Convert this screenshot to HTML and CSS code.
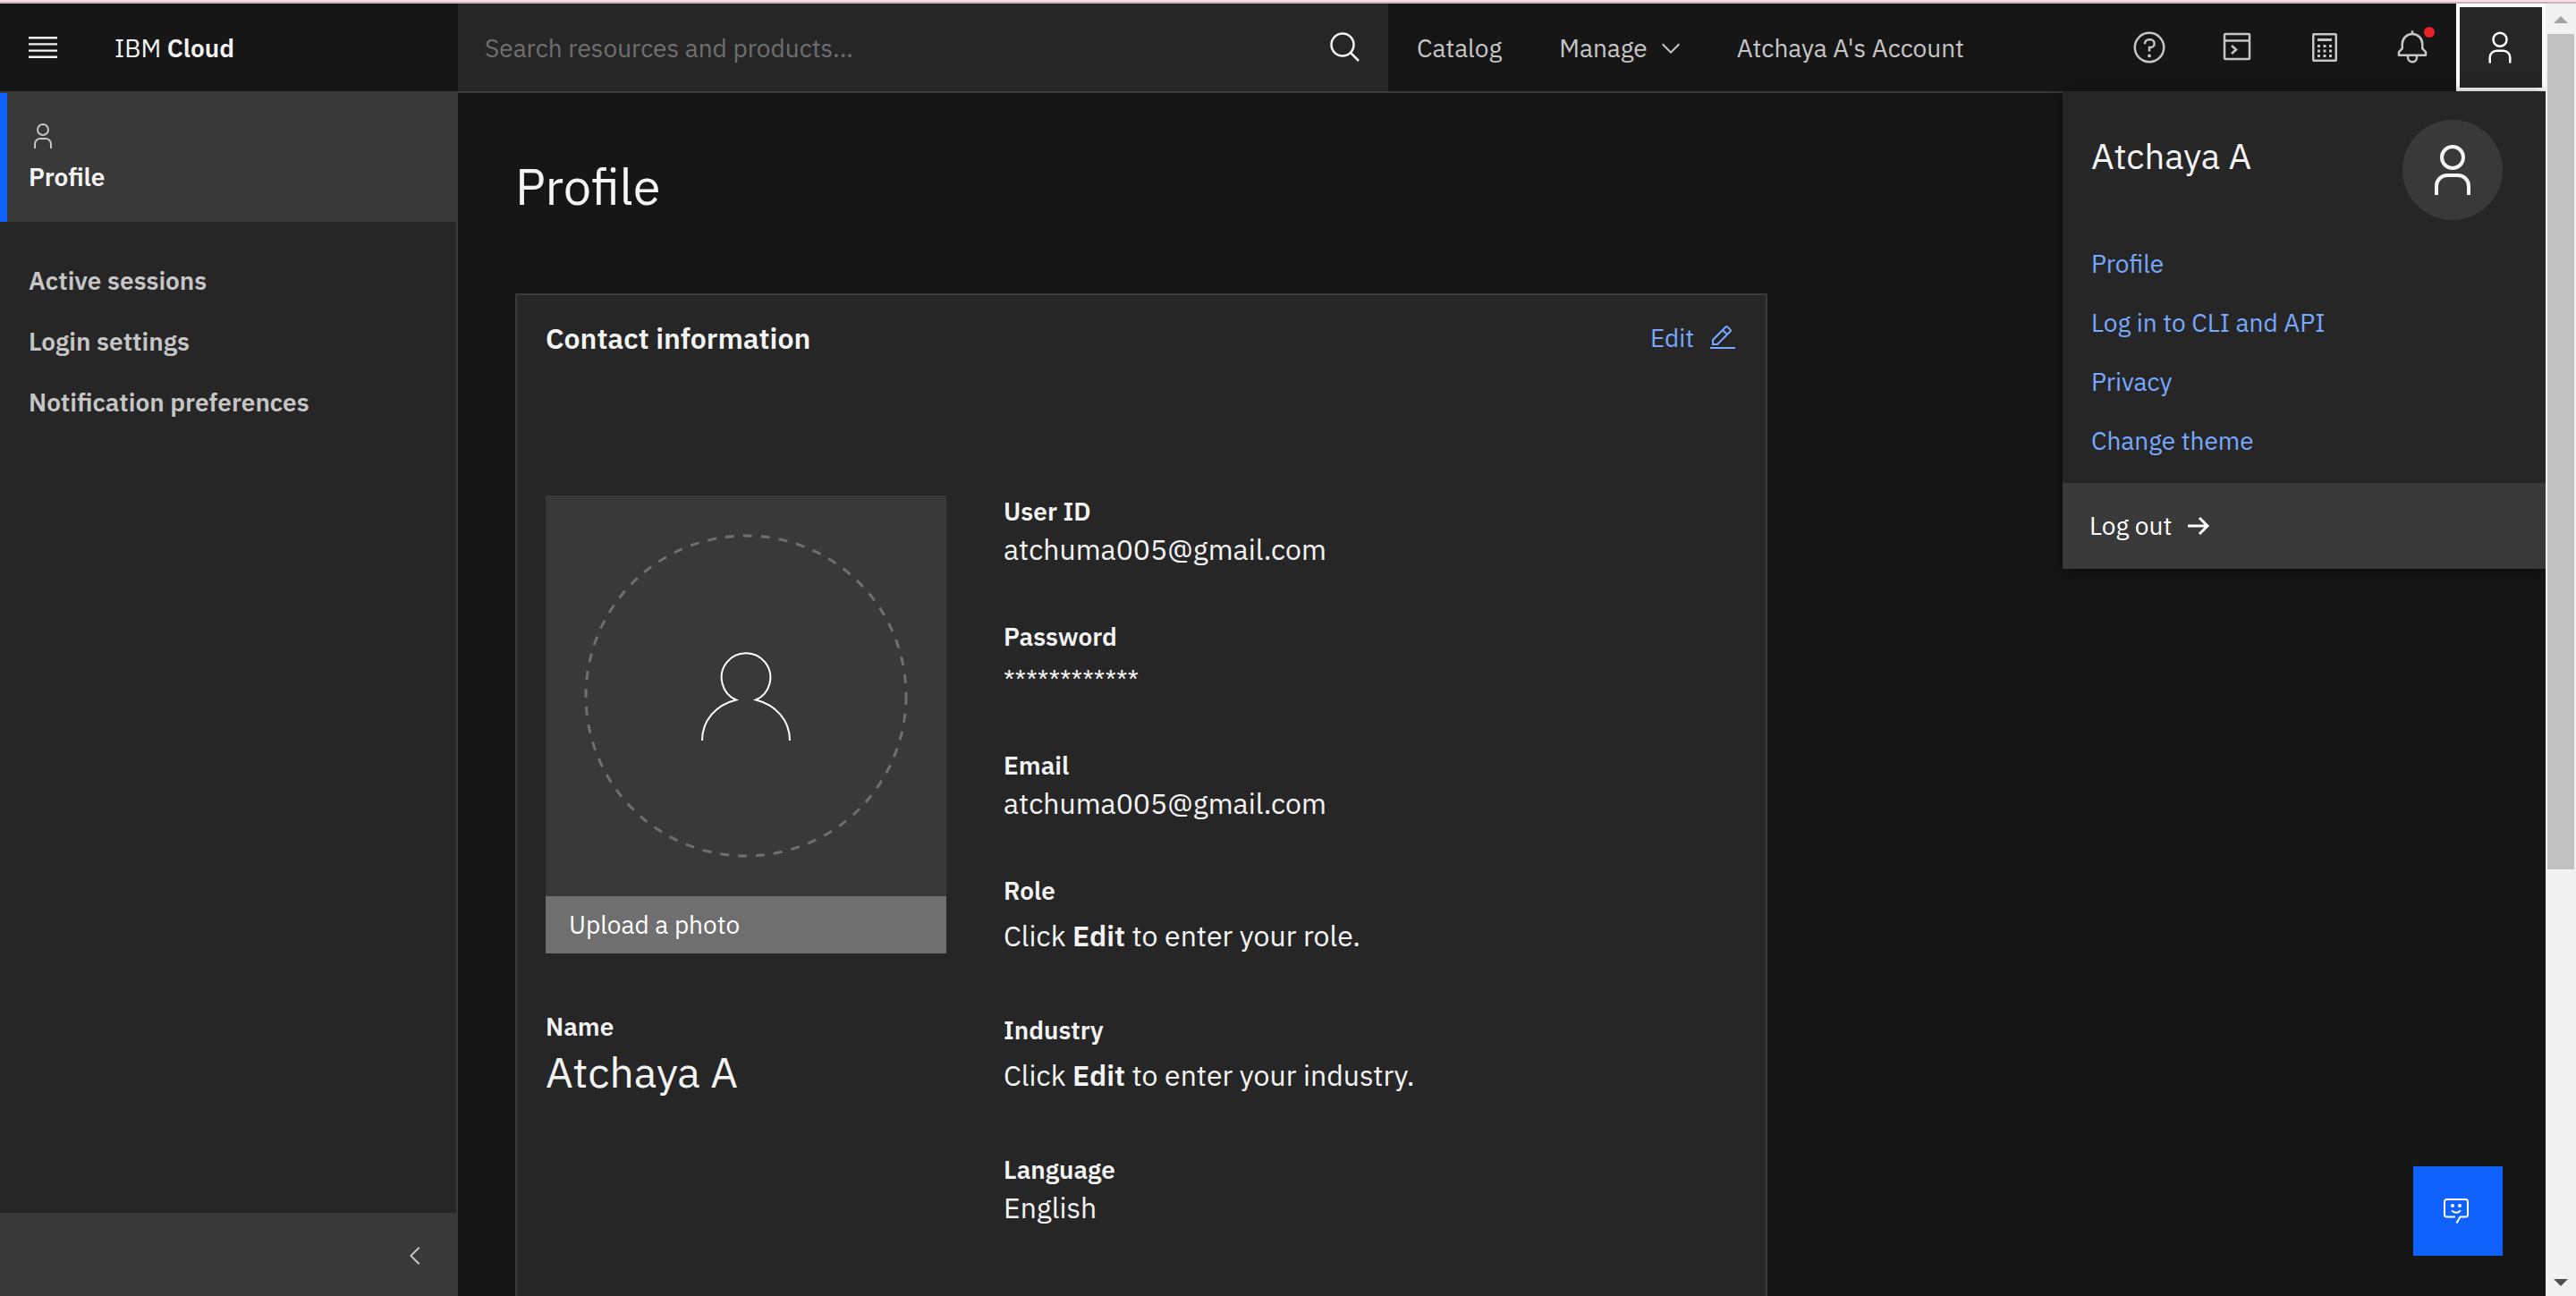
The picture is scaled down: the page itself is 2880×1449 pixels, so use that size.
FILE: index.html
```html
<!DOCTYPE html>
<html lang="en">
<head>
<meta charset="utf-8">
<title>Profile - IBM Cloud</title>
<meta name="viewport" content="width=device-width, initial-scale=1">
<link rel="stylesheet" href="styles.css">
</head>
<body>
<svg class="sprite" aria-hidden="true">
  <symbol id="user" viewBox="0 0 32 32">
    <path d="M16,4a5,5,0,1,1-5,5,5,5,0,0,1,5-5m0-2a7,7,0,1,0,7,7A7,7,0,0,0,16,2Z"/>
    <path d="M26,30H24V25a5,5,0,0,0-5-5H13a5,5,0,0,0-5,5v5H6V25a7,7,0,0,1,7-7h6a7,7,0,0,1,7,7Z"/>
  </symbol>
</svg>
<div class="window">
  <div class="app">
    <header class="header">
      <div class="brand">
        <button class="menu-button" type="button" aria-label="Open menu">
          <svg class="icon" viewBox="0 0 20 20"><path d="M2 14.8h16V16H2zM2 11.2h16v1.2H2zM2 7.6h16v1.2H2zM2 4h16v1.2H2z"/></svg>
        </button>
        <a class="brand-name" href="#">IBM <b>Cloud</b></a>
      </div>
      <form class="search">
        <input class="search-input" type="text" aria-label="Search" placeholder="Search resources and products...">
        <button class="search-button" type="button" aria-label="Search">
          <svg class="icon line" viewBox="0 0 40 40"><circle cx="17" cy="17" r="12.500"/><path d="M26 26l9 9"/></svg>
        </button>
      </form>
      <nav class="nav">
        <a href="#">Catalog</a>
        <a class="nav-menu" href="#">Manage
          <svg class="chevron" viewBox="6 6 20 20"><path d="M16 22L6 12l1.400-1.400 8.600 8.600 8.600-8.600L26 12z"/></svg>
        </a>
        <a href="#">Atchaya A's Account</a>
      </nav>
      <div class="actions">
        <button type="button" aria-label="Help">
          <svg class="icon" viewBox="0 0 32 32"><path d="M16 2a14 14 0 1014 14A14 14 0 0016 2zm0 26a12 12 0 1112-12A12 12 0 0116 28z"/><circle cx="16" cy="23.500" r="1.500"/><path d="M17 8h-1.500A4.490 4.490 0 0011 12.500V13h2v-.5A2.500 2.500 0 0115.500 10H17a2.500 2.500 0 010 5h-2v4.500h2V17a4.500 4.500 0 000-9z"/></svg>
        </button>
        <button type="button" aria-label="Cloud Shell">
          <svg class="icon line" viewBox="0 0 40 40"><rect x="6" y="5" width="28" height="28" rx="1"/><path d="M6 12.500h28M14 18l5 4.500-5 4.500"/></svg>
        </button>
        <button type="button" aria-label="Cost estimator">
          <svg class="icon" viewBox="0 0 40 40"><path d="M32 4H8a2 2 0 00-2 2v28a2 2 0 002 2h24a2 2 0 002-2V6a2 2 0 00-2-2zm-.5 29.500h-23v-27h23z"/><path d="M12 10h16v3H12zM12 17h3v3h-3zM18.500 17h3v3h-3zM25 17h3v3h-3zM12 22.500h3v3h-3zM18.500 22.500h3v3h-3zM25 22.500h3v3h-3zM12 28h3v3h-3zM18.500 28h3v3h-3zM25 28h3v3h-3z"/></svg>
        </button>
        <button class="bell" type="button" aria-label="Notifications">
          <svg class="icon" viewBox="0 0 32 32"><path d="M28.700 19.300L26 16.600V13a10 10 0 00-9-9.950V1h-2v2.050A10 10 0 006 13v3.600l-2.700 2.700A1 1 0 003 20v3a1 1 0 001 1h7v.8a5.100 5.100 0 004.500 5.200A5 5 0 0021 25v-1h7a1 1 0 001-1v-3a1 1 0 00-.3-.7zM19 25a3 3 0 01-6 0v-1h6zm8-3H5v-1.600l2.700-2.700A1 1 0 008 17v-4a8 8 0 0116 0v4a1 1 0 00.3.700l2.700 2.700z"/></svg>
          <span class="dot"></span>
        </button>
        <button class="account" type="button" aria-label="Account" aria-expanded="true">
          <svg class="icon"><use href="#user"/></svg>
        </button>
      </div>
      <section class="panel" aria-label="Account menu">
        <div class="panel-body">
          <div class="panel-head">
            <h2 class="panel-name">Atchaya A</h2>
            <span class="avatar"><svg class="avatar-icon"><use href="#user"/></svg></span>
          </div>
          <ul class="panel-links">
            <li><a href="#">Profile</a></li>
            <li><a href="#">Log in to CLI and API</a></li>
            <li><a href="#">Privacy</a></li>
            <li><a href="#">Change theme</a></li>
          </ul>
        </div>
        <button class="logout" type="button">Log out
          <svg class="arrow" viewBox="0 0 28 28"><path d="M2 14h22M15 5l9 9-9 9"/></svg>
        </button>
      </section>
    </header>
    <div class="content">
      <aside class="sidebar">
        <a class="side-current" href="#">
          <svg class="side-icon"><use href="#user"/></svg>
          Profile
        </a>
        <nav class="side-links">
          <a href="#">Active sessions</a>
          <a href="#">Login settings</a>
          <a href="#">Notification preferences</a>
        </nav>
        <button class="collapse" type="button" aria-label="Collapse navigation">
          <svg class="side-icon" viewBox="0 0 32 32"><path d="M10 16L20 6l1.400 1.400-8.600 8.600 8.600 8.600L20 26z"/></svg>
        </button>
      </aside>
      <main class="main">
        <h1 class="title">Profile</h1>
        <section class="card">
          <div class="card-head">
            <h2 class="card-title">Contact information</h2>
            <button class="edit" type="button">Edit
              <svg class="side-icon" viewBox="0 0 32 32"><path d="M2 26h28v2H2zM25.400 9c.8-.8.8-2 0-2.800l-3.600-3.600c-.8-.8-2-.8-2.800 0l-15 15V24h6.400zM20.400 4L24 7.600l-3 3L17.400 7zM6 22v-3.600l10-10 3.600 3.600-10 10z"/></svg>
            </button>
          </div>
          <div class="card-grid">
            <div>
              <div class="photo">
                <svg class="photo-art" viewBox="0 0 448 448" aria-hidden="true">
                  <circle class="ring" cx="224" cy="224" r="179"/>
                  <path class="figure" d="M175 274C175 251 191 234 213 228.500A27.300 27.300 0 1 1 235 228.500C257 234 273 251 273 274"/>
                </svg>
                <button class="upload" type="button">Upload a photo</button>
              </div>
              <dl>
                <dt>Name</dt>
                <dd class="name">Atchaya A</dd>
              </dl>
            </div>
            <dl class="fields">
              <div><dt>User ID</dt><dd>atchuma005@gmail.com</dd></div>
              <div class="masked"><dt>Password</dt><dd>************</dd></div>
              <div><dt>Email</dt><dd>atchuma005@gmail.com</dd></div>
              <div class="hint"><dt>Role</dt><dd>Click <b>Edit</b> to enter your role.</dd></div>
              <div class="hint"><dt>Industry</dt><dd>Click <b>Edit</b> to enter your industry.</dd></div>
              <div><dt>Language</dt><dd>English</dd></div>
            </dl>
          </div>
        </section>
      </main>
    </div>
    <button class="chat" type="button" aria-label="Chat">
      <svg class="chat-icon" viewBox="0 0 32 32"><path d="M15 22.500H5.500A2.500 2.500 0 013 20V5.500A2.500 2.500 0 015.500 3h21A2.500 2.500 0 0129 5.500V20a2.500 2.500 0 01-2.500 2.500H20.500L16.500 29.500M11 15.500q5 4.500 10 0"/><circle cx="12" cy="10" r="1"/><circle cx="20" cy="10" r="1"/></svg>
    </button>
  </div>
  <div class="scrollbar" aria-hidden="true">
    <span class="scroll-up"></span>
    <span class="thumb"></span>
    <span class="scroll-down"></span>
  </div>
</div>
</body>
</html>
```
FILE: styles.css
```css
* { box-sizing: border-box; }

body {
  margin: 0;
  height: 100vh;
  overflow: hidden;
  display: flex;
  flex-direction: column;
  border-top: 2px solid #fddde4;
  background: #161616;
  color: #f4f4f4;
  font: 28px/36px "IBM Plex Sans", Roboto, sans-serif;
}

h1, h2, dl, dd, ul { margin: 0; padding: 0; font-weight: 400; }
ul { list-style: none; }
a { color: inherit; text-decoration: none; }
b, dt { font-weight: 600; }

button {
  border: 0;
  padding: 0;
  background: none;
  color: inherit;
  font: inherit;
}

svg { display: block; fill: currentColor; }
.sprite { position: absolute; width: 0; height: 0; }
.icon { width: 40px; height: 40px; }
.line { fill: none; stroke: currentColor; stroke-width: 2.5; }

.window {
  flex: 1;
  min-height: 0;
  display: flex;
  border-top: 2px solid #c9b3b9;
}

.app {
  position: relative;
  flex: 1;
  min-width: 0;
  display: flex;
  flex-direction: column;
}

/* Header */
.header {
  position: relative;
  z-index: 1;
  flex: none;
  height: 100px;
  display: flex;
  border-bottom: 2px solid #393939;
}

.brand {
  width: 512px;
  display: flex;
  align-items: center;
  gap: 60px;
  padding-left: 28px;
}

.search {
  flex: 0 1 1040px;
  display: flex;
  align-items: center;
  padding: 0 28px 0 30px;
  background: #262626;
}

.search-input {
  flex: 1;
  min-width: 0;
  border: 0;
  padding: 2px 0 0;
  background: none;
  color: inherit;
  font: inherit;
}
.search-input::placeholder { color: #6f6f6f; opacity: 1; }

.brand-name { padding-top: 2px; }

.nav {
  display: flex;
  align-items: center;
  gap: 64px;
  padding: 2px 0 0 32px;
  color: #c6c6c6;
}
.nav-menu { display: flex; align-items: center; gap: 16px; }
.chevron { width: 20px; height: 20px; }

.actions { display: flex; margin-left: auto; color: #c6c6c6; }
.actions button { width: 98px; display: grid; place-items: center; }
.bell { position: relative; }
.dot {
  position: absolute;
  top: 26px;
  right: 24px;
  width: 12px;
  height: 12px;
  border-radius: 50%;
  background: #ee2025;
}
.actions .account {
  width: 100px;
  padding-right: 2px;
  border: 4px solid #fff;
  background: #262626;
  color: #fff;
}

/* Account panel */
.panel {
  position: absolute;
  top: 98px;
  right: 0;
  width: 540px;
  background: #262626;
  box-shadow: 0 4px 16px rgba(0, 0, 0, 0.6);
}
.panel-body { padding: 32px 48px 14px 32px; }
.panel-head { display: flex; justify-content: space-between; }
.panel-name { padding-top: 16px; font-size: 40px; line-height: 48px; }
.avatar {
  width: 112px;
  height: 112px;
  display: grid;
  place-items: center;
  border-radius: 50%;
  background: #393939;
}
.avatar-icon { width: 64px; height: 64px; }
.panel-links { padding-top: 16px; color: #78a9ff; line-height: 66px; }
.logout {
  width: 100%;
  height: 96px;
  display: flex;
  align-items: center;
  gap: 16px;
  padding-left: 30px;
  background: #393939;
  color: #fff;
}
.arrow { width: 28px; height: 28px; fill: none; stroke: currentColor; stroke-width: 3; }

/* Sidebar */
.content { flex: 1; min-height: 0; display: flex; }
.sidebar {
  width: 512px;
  flex: none;
  display: flex;
  flex-direction: column;
  border-right: 2px solid #393939;
  background: #262626;
  font-weight: 600;
}
.side-current {
  height: 144px;
  display: flex;
  flex-direction: column;
  gap: 12px;
  padding: 32px 24px;
  border-left: 8px solid #0f62fe;
  background: #393939;
}
.side-icon { width: 32px; height: 32px; }
.side-current .side-icon { color: #c6c6c6; }
.side-links {
  display: flex;
  flex-direction: column;
  padding: 32px;
  color: #c6c6c6;
  line-height: 68px;
}
.collapse {
  height: 93px;
  margin-top: auto;
  display: flex;
  align-items: center;
  justify-content: flex-end;
  padding: 2px 30px 0 0;
  background: #393939;
  color: #c6c6c6;
}

/* Profile page */
.main { flex: 1; min-width: 0; overflow: hidden; padding: 68px 64px 0; }
.title { font-size: 56px; line-height: 72px; }
.card {
  max-width: 1400px;
  min-height: 1400px;
  margin-top: 84px;
  padding: 28px 32px;
  border: 2px solid #393939;
  background: #262626;
}
.card-head { display: flex; justify-content: space-between; }
.card-title { font-size: 32px; font-weight: 600; line-height: 40px; }
.edit { display: flex; align-items: center; gap: 16px; color: #78a9ff; }
.card-grid {
  display: grid;
  grid-template-columns: 448px 1fr;
  gap: 64px;
  margin-top: 156px;
}
.photo { margin-bottom: 64px; background: #393939; }
.photo-art { width: 100%; }
.ring { fill: none; stroke: #6f6f6f; stroke-width: 3; stroke-dasharray: 10 10; }
.figure { fill: none; stroke: #fff; stroke-width: 2; }
.upload {
  width: 100%;
  height: 64px;
  padding-left: 26px;
  background: #6f6f6f;
  color: #fff;
  text-align: left;
}
.fields { display: flex; flex-direction: column; gap: 56px; }
.fields dd { font-size: 32px; line-height: 48px; }
.fields .masked dd { padding-top: 8px; font-size: 28px; line-height: 44px; }
.hint dd { padding: 8px 0; }
.name { font-size: 48px; line-height: 64px; }

/* Chat launcher floats over the page */
.chat {
  position: absolute;
  right: 48px;
  bottom: 45px;
  width: 100px;
  height: 100px;
  display: grid;
  place-items: center;
  padding-right: 4px;
  background: #0f62fe;
  color: #fff;
}
.chat-icon { width: 32px; height: 32px; stroke: currentColor; stroke-width: 2; fill: none; }

/* Page scrollbar */
.scrollbar {
  position: relative;
  z-index: 2;
  width: 34px;
  flex: none;
  display: flex;
  flex-direction: column;
  align-items: center;
  background: #f1f1f1;
}
.scroll-up, .scroll-down { border: 8px solid transparent; }
.scroll-up { margin: 6px 0 12px; border-bottom-color: #a3a3a3; }
.scroll-down { margin: auto 0 3px; border-top-color: #505050; }
.thumb { width: 30px; height: calc(65% - 5px); background: #c1c1c1; }
```
